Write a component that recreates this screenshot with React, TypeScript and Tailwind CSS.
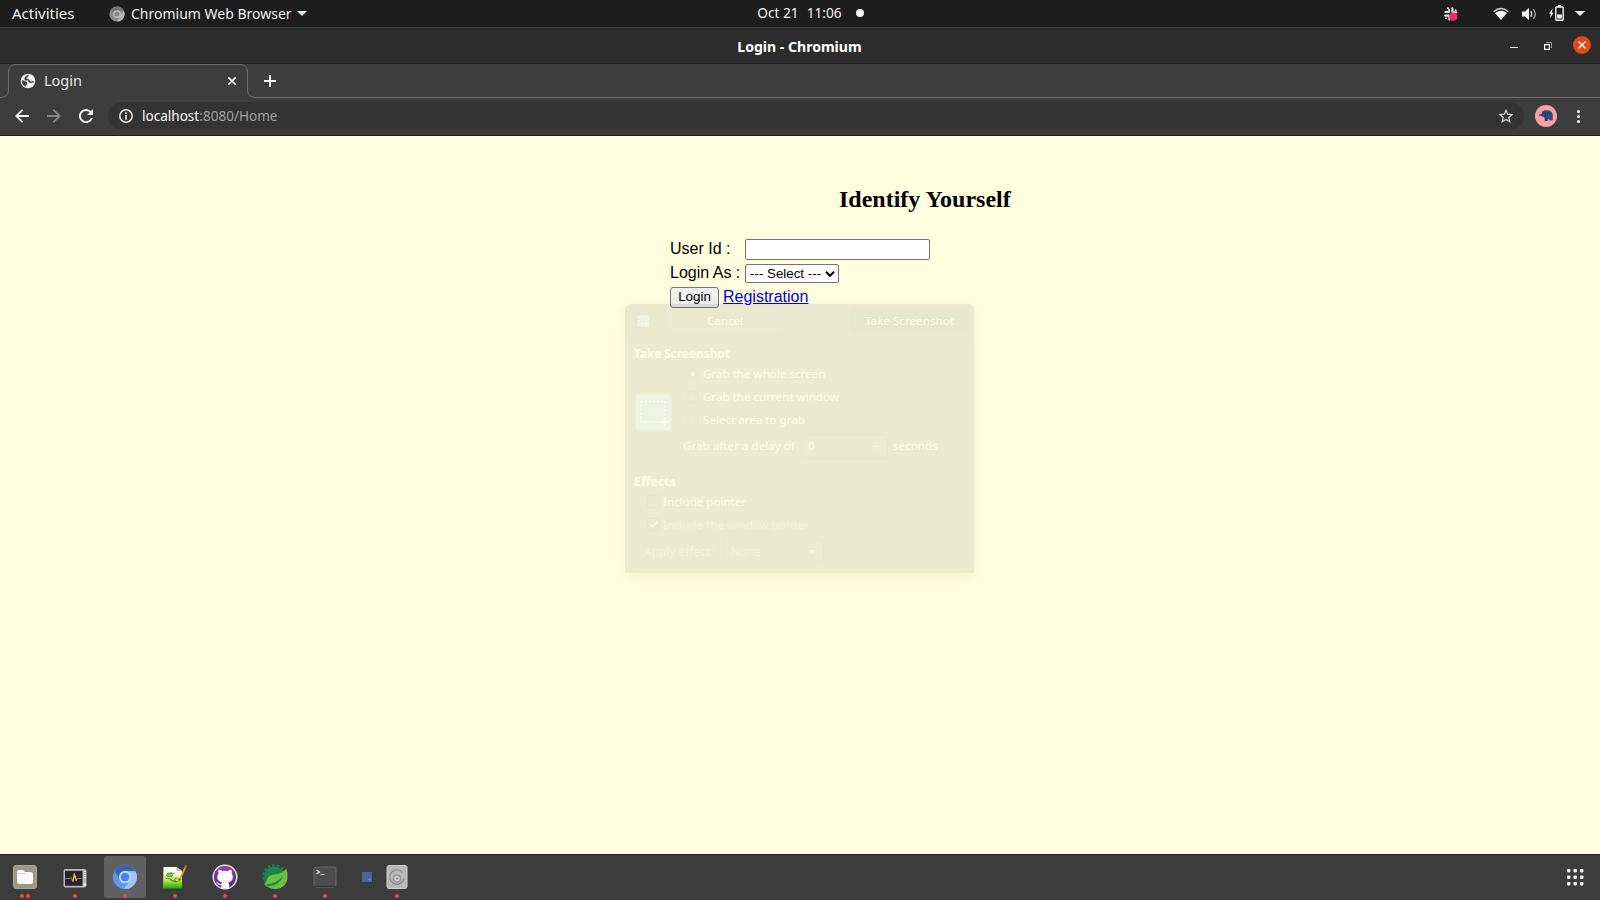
import type { ReactNode } from 'react';

function TopBar() {
  return (
    <header className="grid h-[27px] shrink-0 grid-cols-[1fr_auto_1fr] items-center bg-[#1d1d1d] text-[#f0f0f0]">
      <div className="flex items-center pl-3">
        <span className="w-[97px] text-[15px]">Activities</span>
        <svg className="h-4 w-4" viewBox="0 0 16 16">
          <circle cx="8" cy="8" r="7.6" fill="#8c8c8c" />
          <path d="M8 8 1.5 4.2A7.6 7.6 0 0 1 14.8 4.6H8Z" fill="#737373" />
          <path d="M14.8 4.6A7.6 7.6 0 0 1 8 15.6l3.2-6Z" fill="#b5b5b5" />
          <circle cx="8" cy="8" r="3.7" fill="#c8c8c8" />
          <circle cx="8" cy="8" r="2.6" fill="#858585" />
        </svg>
        <span className="ml-[6px] text-[14px]">Chromium Web Browser</span>
        <svg className="ml-[5px] h-[5px] w-[10px]" viewBox="0 0 10 5"><path d="M0 0h10L5 5Z" fill="#f0f0f0" /></svg>
      </div>
      <div className="flex items-center pl-[21px] text-[13.7px]">
        <span className="mr-2">Oct 21</span>
        <span>11:06</span>
        <span className="ml-[14px] h-2 w-2 rounded-full bg-[#f2f2f2]" />
      </div>
      <div className="flex items-center justify-end pr-[15px]">
        <svg className="mr-[34px] h-4 w-4" viewBox="0 0 16 16">
          <g stroke="#e4e4e4" strokeWidth="2.1" strokeLinecap="round">
            <path d="M6.2 3.8v2M2.4 6h3.4M9.4 2.2v3.4M9.8 6.4h3.4M2.2 9.6h3.4M6.4 10v3.4" />
          </g>
          <circle cx="5" cy="2.2" r="1" fill="#e4e4e4" />
          <circle cx="12.6" cy="4.2" r="1" fill="#e4e4e4" />
          <circle cx="3" cy="12.2" r=".9" fill="#e4e4e4" />
          <circle cx="10.2" cy="10.7" r="4.1" fill="#ee2b75" />
        </svg>
        <svg className="mr-[13px] h-[14px] w-4" viewBox="0 0 16 14">
          <path d="M.7 4.7Q8-1.6 15.3 4.7" fill="none" stroke="#d2d2d2" strokeWidth="1.5" />
          <path d="M2 6.1Q8 1.5 14 6.1L8 13Z" fill="#f4f4f4" />
        </svg>
        <svg className="mr-[12px] h-[14px] w-[15px]" viewBox="0 0 15 14">
          <path d="M0 4.5h3L7 .8v12.4L3 9.5H0Z" fill="#f2f2f2" />
          <path d="M8.8 4.2Q10.5 7 8.8 9.8" fill="none" stroke="#ddd" strokeWidth="1.4" />
          <path d="M11.3 2.2Q15.3 7 11.3 11.8" fill="none" stroke="#aaa" strokeWidth="1.3" />
        </svg>
        <svg className="mr-[11px] mb-[2px] h-4 w-[15px]" viewBox="0 0 15 16">
          <path d="M3.8 3.2 0 8.7h1.8L1.2 13l3.2-5.3H2.8Z" fill="#f2f2f2" />
          <rect x="6.8" y="2" width="7.4" height="13.2" rx=".8" fill="none" stroke="#f2f2f2" strokeWidth="1.4" />
          <path d="M9 0h3v2H9ZM8.2 9.4h4.6v4.2H8.2Z" fill="#f2f2f2" />
        </svg>
        <svg className="h-[5px] w-[10px]" viewBox="0 0 10 5"><path d="M0 0h10L5 5Z" fill="#f0f0f0" /></svg>
      </div>
    </header>
  );
}

function TitleBar() {
  return (
    <div className="grid h-[37px] shrink-0 grid-cols-[1fr_auto_1fr] items-center border-t border-b border-t-[#3b3b3b] border-b-[#222] bg-[#2c2c2c]">
      <span />
      <span className="pt-px pr-px text-[14.05px] leading-[15px] font-bold text-white">Login - Chromium</span>
      <div className="flex items-center justify-end pr-[9px]">
        <span className="mt-1 mr-[26px] h-px w-2 bg-[#eee]" />
        <svg className="mr-[21px] h-2 w-2" viewBox="0 0 8 8">
          <path d="M2 .5h5.5V6" fill="none" stroke="#999" />
          <rect x=".6" y="2.6" width="4.8" height="4.8" fill="none" stroke="#fff" strokeWidth="1.2" />
        </svg>
        <span className="mb-px flex h-[18px] w-[18px] items-center justify-center rounded-full bg-[#df4b17]">
          <svg className="h-2 w-2" viewBox="0 0 8 8"><path d="M.5.5l7 7M7.5.5l-7 7" stroke="#fff" strokeWidth="1.3" /></svg>
        </span>
      </div>
    </div>
  );
}

function TabStrip() {
  return (
    <div className="flex h-[34px] shrink-0 bg-[#3d3d3d]">
      <div className="relative flex w-[256px] shrink-0 items-center pl-5">
        <svg className="absolute inset-0 h-[34px] w-[256px]" viewBox="0 0 256 34">
          <path d="M0 33.5Q8.5 33.5 8.5 26V8Q8.5.5 16 .5H240Q247.5.5 247.5 8V26Q247.5 33.5 256 33.5" fill="none" stroke="#707070" />
        </svg>
        <svg className="h-4 w-4" viewBox="0 0 16 16">
          <circle cx="8" cy="8" r="7.3" fill="#f1f1f1" />
          <path d="M2.2 7.6 5.4 8.2 7 9.600 7 11.200 5.600 12.200 5.400 13.600 3.400 12 2.200 9.600ZM8.600 2.200 8 3.800 6.200 4.400 6.600 6 9 6.400 9.600 8.200 11.200 8.800 13 8 13.600 9.200 11.800 9.800 9 9.200 8.200 7.400 5 7 4.600 5.200 6.400 2.800Z" fill="#3d3d3d" stroke="#3d3d3d" strokeWidth=".4" />
        </svg>
        <span className="mb-[2px] ml-2 text-[14.5px] leading-[24px] text-[#e6e6e6]">Login</span>
        <svg className="mr-5 ml-auto h-2 w-2" viewBox="0 0 8 8"><path d="m.3.3 7.4 7.4m0-7.4L.3 7.7" stroke="#f1f1f1" strokeWidth="1.7" /></svg>
      </div>
      <div className="flex grow items-center border-b border-[#707070] pl-2">
        <svg className="h-3 w-3" viewBox="0 0 12 12"><path d="M6 0v12M0 6h12" stroke="#f5f5f5" strokeWidth="2" /></svg>
      </div>
    </div>
  );
}

function Toolbar() {
  return (
    <div className="flex h-[38px] shrink-0 items-center border-b border-[#1f1f1f] bg-[#3d3d3d] pb-px pl-[15px]">
      <svg className="h-[14px] w-[14px]" viewBox="0 0 14 14"><path d="M14 7H1.5M7.5.8 1.3 7l6.2 6.2" fill="none" stroke="#f2f2f2" strokeWidth="1.9" /></svg>
      <svg className="ml-[18px] h-[14px] w-[14px]" viewBox="0 0 14 14"><path d="M0 7h12.5M6.5.8 12.7 7l-6.2 6.2" fill="none" stroke="#848484" strokeWidth="1.9" /></svg>
      <svg className="ml-[18px] h-[14px] w-[14px]" viewBox="0 0 14 14">
        <path d="M12.8 9A6.1 6.1 0 1 1 11.5 2.9L12.5 4" fill="none" stroke="#f2f2f2" strokeWidth="1.9" />
        <path d="M14 0v6H8Z" fill="#f2f2f2" />
      </svg>
      <div className="ml-[15px] flex h-7 w-[1416px] items-center rounded-full bg-[#333] pl-[11px]">
        <svg className="h-[14px] w-[14px]" viewBox="0 0 14 14">
          <circle cx="7" cy="7" r="6.2" fill="none" stroke="#e8e8e8" strokeWidth="1.5" />
          <path d="M7 3.2v1.6M7 6v4.8" stroke="#e8e8e8" strokeWidth="1.6" />
        </svg>
        <span className="ml-[9px] text-[13.55px] text-[#fafafa]">localhost<span className="text-[#a0a0a0]">:8080/Home</span></span>
        <svg className="mr-[11px] ml-auto h-[14px] w-[14px]" viewBox="0 0 24 24">
          <path d="m12 2 2.9 7 7.6.6-5.8 4.9 1.8 7.4L12 18l-6.5 3.900 1.8-7.4-5.8-4.9 7.6-.6Z" fill="none" stroke="#cfcfcf" strokeWidth="2.2" />
        </svg>
      </div>
      <svg className="ml-[11px] h-[22px] w-[22px]" viewBox="0 0 22 22">
        <circle cx="11" cy="11" r="11" fill="#ff9ea3" />
        <path d="M4 9.5l2.5-.6.6-2.4 2.4-1.3 5 .4 2.7 2.2.7 3-.3 4.7h-3l-.8-2-1.2 2.6h-3l-.2-4.2-2-.2-1.6-1.2-1.4.5Z" fill="#244e80" />
        <path d="m8.5 6.7 2.4 2.6-1.2 2.3m3.3-4.2 2.2 1.9" fill="none" stroke="#173254" />
      </svg>
      <div className="ml-[20px] flex flex-col gap-[2px]">
        <i className="h-[3px] w-[3px] rounded-full bg-white" />
        <i className="h-[3px] w-[3px] rounded-full bg-white" />
        <i className="h-[3px] w-[3px] rounded-full bg-white" />
      </div>
    </div>
  );
}

function Radio({ checked, label }: { checked?: boolean; label: string }) {
  return (
    <div className="flex h-[23px] items-center">
      <span className={checked
        ? 'mr-1 flex h-3 w-3 items-center justify-center rounded-full bg-[#eee5ce]'
        : 'mr-1 flex h-3 w-3 items-center justify-center rounded-full border border-[#e6e6cb]'}>
        {checked && <i className="h-1 w-1 rounded-full bg-[#fffff0]" />}
      </span>
      <span className="text-[11.6px]">{label}</span>
    </div>
  );
}

function ScreenshotDialog() {
  return (
    <div className="absolute top-[168px] left-[625px] h-[269px] w-[349px] rounded-t-[6px] bg-[#2a2e3a]/[0.095] text-[#ffffe4] shadow-[0_3px_14px_rgba(60,60,20,0.07)]">
      <div className="flex h-[33px] items-center rounded-t-[6px] bg-black/[0.008] pl-3">
        <svg className="h-3 w-3" viewBox="0 0 12 12">
          <rect width="12" height="12" rx="1" fill="#eef2e2" />
          <path d="M2 2h7v7H2Z" fill="none" stroke="#fdfddf" strokeDasharray="1 1" /><path d="M9.5 7v4m-2-2h4" stroke="#fdfddf" />
        </svg>
        <span className="ml-[18px] flex h-[23px] w-[116px] items-center justify-center rounded-sm bg-[#eaead0] text-[11.6px]">Cancel</span>
        <span className="ml-[68px] flex h-6 w-[117px] items-center justify-center rounded-sm bg-[#e3e9ca] text-[11.67px]">Take Screenshot</span>
      </div>
      <div className="flex flex-col pl-[9px]">
        <span className="mt-[7px] text-[11.8px] leading-[18px] font-bold">Take Screenshot</span>
        <div className="flex h-[69px] items-end">
          <svg className="ml-px h-[37px] w-[37px]" viewBox="0 0 37 37">
            <rect x=".5" y=".5" width="36" height="36" rx="4" fill="#eff3e3" />
            <path d="M6 7.5h24V28H6Z" fill="none" stroke="#fffff0" strokeWidth="1.5" strokeDasharray="2 2" />
            <path d="M29.5 24v8m-4-4h8" stroke="#fffff0" strokeWidth="1.5" />
          </svg>
          <div className="ml-[15px] flex flex-col">
            <Radio checked label="Grab the whole screen" />
            <Radio label="Grab the current window" />
            <Radio label="Select area to grab" />
          </div>
        </div>
        <div className="mt-[2px] flex h-[26px] items-center pl-[49px] text-[11.67px]">
          <span className="w-[118px]">Grab after a delay of</span>
          <span className="flex h-[25px] w-[87px] items-center justify-between rounded-sm border border-[#e7e7cc] px-[6px]">
            <span>0</span>
            <svg className="h-[9px] w-[9px]" viewBox="0 0 9 9"><path d="M4.5 0v9M0 4.5h9" stroke="#f3f3d7" /></svg>
          </span>
          <span className="ml-[5px]">seconds</span>
        </div>
        <span className="mt-[13px] text-[12.3px] leading-[20px] font-bold">Effects</span>
        <div className="mt-[-2px] flex h-[23px] items-center pl-[13px] text-[11.55px]">
          <i className="mr-[3px] h-[13px] w-[13px] rounded-[2px] border border-[#e6e6cb]" />Include pointer
        </div>
        <div className="flex h-[23px] items-center pl-[13px] text-[11.5px] text-[#f4f4d8]">
          <span className="mr-[3px] flex h-[13px] w-[13px] items-center justify-center rounded-[2px] border border-[#e6e6cb]">
            <svg className="h-[7px] w-[9px] shrink-0" viewBox="0 0 9 7"><path d="m.6 3 2.7 3L8.5.8" fill="none" stroke="#fafadc" strokeWidth="1.5" /></svg>
          </span>
          Include the window border
        </div>
        <div className="mt-[3px] flex h-[25px] items-center pl-[10px] text-[12px] text-[#f4f4d8]">
          <span className="w-[79px]">Apply effect:</span>
          <span className="flex h-[25px] w-[101px] items-center justify-between rounded-sm border border-[#e7e7cc] px-[7px]">
            None
            <svg className="h-1 w-2" viewBox="0 0 8 4"><path d="M0 0h8L4 4Z" fill="#f7f7da" /></svg>
          </span>
        </div>
      </div>
    </div>
  );
}

function LoginPage() {
  return (
    <main className="relative h-[718px] shrink-0 bg-[#ffffdf] text-black">
      <h1 className="pt-[49px] pl-[839px] font-['Liberation_Serif',serif] text-[24px] leading-7 font-bold">Identify Yourself</h1>
      <div className="mt-6 flex flex-col pl-[670px] font-['Liberation_Sans',sans-serif] text-[16px]">
        <label className="flex h-6 items-center">
          <span className="w-[75px] leading-6">User Id :</span>
          <input className="mt-px h-[21px] w-[185px] rounded-[2px] border border-[#767676] bg-white" />
        </label>
        <div className="flex h-6 items-center">
          <span className="w-[75px] leading-6">Login As :</span>
          <span className="mt-px flex h-[19px] w-[94px] items-center rounded-[2px] border border-[#767676] bg-white pl-1 text-[13.333px] leading-none">
            --- Select ---
            <svg className="ml-[4px] h-[6px] w-[10px]" viewBox="0 0 10 6"><path d="m1 .8 4 4 4-4" fill="none" stroke="#000" strokeWidth="2" /></svg>
          </span>
        </div>
        <div className="flex h-6 items-center">
          <button className="mt-px flex h-[21px] w-[49px] items-center justify-center rounded-[3px] border border-[#767676] bg-[#efefef] pb-px text-[13.333px] leading-none">Login</button>
          <a className="ml-1 leading-6 text-[#0000ee] underline" href="#registration">Registration</a>
        </div>
      </div>
      <ScreenshotDialog />
    </main>
  );
}

function DockItem({ children, dots = 1, active }: { children: ReactNode; dots?: number; active?: boolean }) {
  return (
    <div className={active
      ? 'flex h-[42px] w-[42px] flex-col items-center rounded-[3px] bg-[#616161] pt-[8px]'
      : 'flex h-[42px] w-[42px] flex-col items-center pt-[8px]'}>
      <svg className="h-[26px] w-[26px] shrink-0" viewBox="0 0 26 26">{children}</svg>
      <div className="mt-[4px] flex gap-[2px]">
        {Array.from({ length: dots }, (_, i) => <i key={i} className="h-1 w-1 rounded-full bg-[#e95420]" />)}
      </div>
    </div>
  );
}

function Dock() {
  return (
    <footer className="flex h-[46px] shrink-0 items-start border-t border-[#1c1c1c] bg-[#3c3c3c] pt-px pl-1">
      <div className="flex gap-2">
        <DockItem dots={2}>
          <rect x="1.5" y="1.5" width="23" height="23" rx="2.5" fill="#9d9785" stroke="#aaa594" />
          <path d="M5 8q0-2 2-2h4l2 2h6q2 0 2 2v8q0 2-2 2H7q-2 0-2-2Z" fill="#fbfaf8" />
          <path d="M5.5 9.5H13" stroke="#ddd9d2" />
        </DockItem>
        <DockItem>
          <rect x="1.5" y="5" width="23" height="18.5" rx="2" fill="#b9b8b7" />
          <rect x="3" y="6.8" width="17.5" height="15" fill="#2a2234" />
          <path d="M3 14.5h5l1.2-1 1.5 4 1.7-7 2 6 1-2h4" fill="none" stroke="#8f8048" strokeWidth="1" />
          <path d="m10.7 17.5 1.7-7 2 6" fill="none" stroke="#dcc657" strokeWidth="1.3" />
          <path d="M22.7 7v8" stroke="#eee" strokeWidth="2" strokeDasharray="1 1" />
          <circle cx="22.7" cy="20.5" r="1.3" fill="#fff" />
        </DockItem>
        <DockItem active>
          <circle cx="13" cy="13" r="12" fill="#5f98f3" />
          <path d="M2.6 7A12 12 0 0 1 23.4 7H13a6 6 0 0 0-5.2 9Z" fill="#3866af" />
          <path d="M23.4 7.2A12 12 0 0 1 12 25l6.2-9A6 6 0 0 0 13 7.2Z" fill="#a2c2f8" />
          <circle cx="13" cy="13" r="5.9" fill="#e9f1fd" />
          <circle cx="13" cy="13" r="4.6" fill="#4285f4" />
        </DockItem>
        <DockItem>
          <linearGradient id="notepad" x1="0" y1="0" x2="0" y2="1"><stop offset=".3" stopColor="#f5f8ed" /><stop offset=".6" stopColor="#c2e84a" /><stop offset="1" stopColor="#19a817" /></linearGradient>
          <path d="M1.5 3h13l5.5 4v17.5h-19Z" fill="url(#notepad)" />
          <path d="M14.5 3v4H20Z" fill="#bbb" />
          <ellipse cx="7.5" cy="11" rx="3" ry="2" fill="#83c75b" stroke="#4d8a45" strokeWidth=".8" />
          <path d="M3.5 13.5c2 2.5 4.5 0 6.5 2.5s3-1 4 1-2 1-1-2 3 1.5 4.5 0M8 15.5c3 2 6 3 8.5 1.5M8.5 9l4 .5" fill="none" stroke="#4b8536" strokeWidth=".9" />
          <path d="m18 15 5.5-12" stroke="#e8a320" strokeWidth="1.8" /><path d="m23.3 3.5 1.2-2.5" stroke="#bd5548" strokeWidth="1.8" /><path d="m17.4 16.4.8-1.6" stroke="#333" strokeWidth="1.3" />
        </DockItem>
        <DockItem>
          <linearGradient id="octocat" x1="0" y1="0" x2="0" y2="1"><stop stopColor="#9c42a5" /><stop offset="1" stopColor="#4d2a80" /></linearGradient>
          <circle cx="13" cy="13" r="11.8" fill="url(#octocat)" stroke="#fff" strokeWidth="1.3" />
          <path d="M6.6 5.8q1.2-.2 3.6 1.3 2.8-.6 5.6 0 2.4-1.5 3.6-1.3.7 2 .2 3.8 1.4 1.6 1.2 4-.4 4.2-4.6 4.9 1.1 1.2 1 3v2.6H9.3v-3q-3 .5-4-1.8L4 17.8q1.7-.2 2.8 1.5 1 1.1 2.6.5.1-.8.9-1.3-4.6-.7-5-4.9-.2-2.4 1.2-4-.5-1.8.1-3.8Z" fill="#fff" />
        </DockItem>
        <DockItem>
          <circle cx="12.5" cy="13" r="10.5" fill="#168748" />
          <circle cx="12.5" cy="12.5" r="11.3" fill="none" stroke="#168748" strokeWidth="2" strokeDasharray="2.6 2" />
          <path d="M24.3 4.5q3.5 11.5-2.6 17.5-5 4.8-12 2.5-5.5-1.500-7.500-4.500 2.300-1.500 2.600-3.500.7-5.500 7.700-6 8-.5 11.800-6Z" fill="#6fbe44" />
          <path d="M4 20.5Q15.5 19.5 21.5 11.5 17.5 21.5 6 22.5" fill="#168748" />
        </DockItem>
        <DockItem>
          <rect x="2" y="3" width="22" height="20" rx="2" fill="#4c4c4c" stroke="#686868" />
          <path d="M2.5 22.3h21" stroke="#303030" />
          <path d="m4.5 6 3 2-3 2M8.5 10.5h4" fill="none" stroke="#ddd" strokeWidth="1.2" />
        </DockItem>
      </div>
      <svg className="mt-[16px] ml-[16px] h-[10px] w-[10px]" viewBox="0 0 10 10">
        <rect width="10" height="10" fill="#4c649c" /><path d="M1.5 1.5h6v6h-6Z" fill="none" stroke="#5d73a7" strokeWidth=".5" strokeDasharray="1 1" /><path d="M7.5 6v3M6 7.5h3" stroke="#7287b5" />
      </svg>
      <div className="ml-[4px]">
        <DockItem>
          <rect x="3" y="1.5" width="20" height="23" rx="2" fill="#b9b9b9" stroke="#cdcdcd" />
          <path d="M18.5 8.5a7.2 7.2 0 1 0 1.5 6" fill="none" stroke="#8c8c8c" strokeWidth="1.4" />
          <circle cx="13" cy="14.5" r="3.5" fill="#c9c9c9" stroke="#8c8c8c" strokeWidth="1.2" />
          <circle cx="13" cy="14.5" r="1" fill="#888" />
          <path d="m9 20-1.5 1.5" stroke="#888" />
        </DockItem>
      </div>
      <svg className="mt-[13px] mr-[16px] ml-auto h-[17px] w-[17px]" viewBox="0 0 17 17" fill="#f2f2f2">
        {[0, 6.5, 13].flatMap((y) => [0, 6.5, 13].map((x) => <rect key={`${x}-${y}`} x={x} y={y} width="3.4" height="3.4" rx=".8" />))}
      </svg>
    </footer>
  );
}

export default function App() {
  return (
    <div className="flex h-[900px] w-[1600px] flex-col overflow-hidden font-['Noto_Sans',sans-serif]">
      <TopBar />
      <TitleBar />
      <TabStrip />
      <Toolbar />
      <LoginPage />
      <Dock />
    </div>
  );
}
